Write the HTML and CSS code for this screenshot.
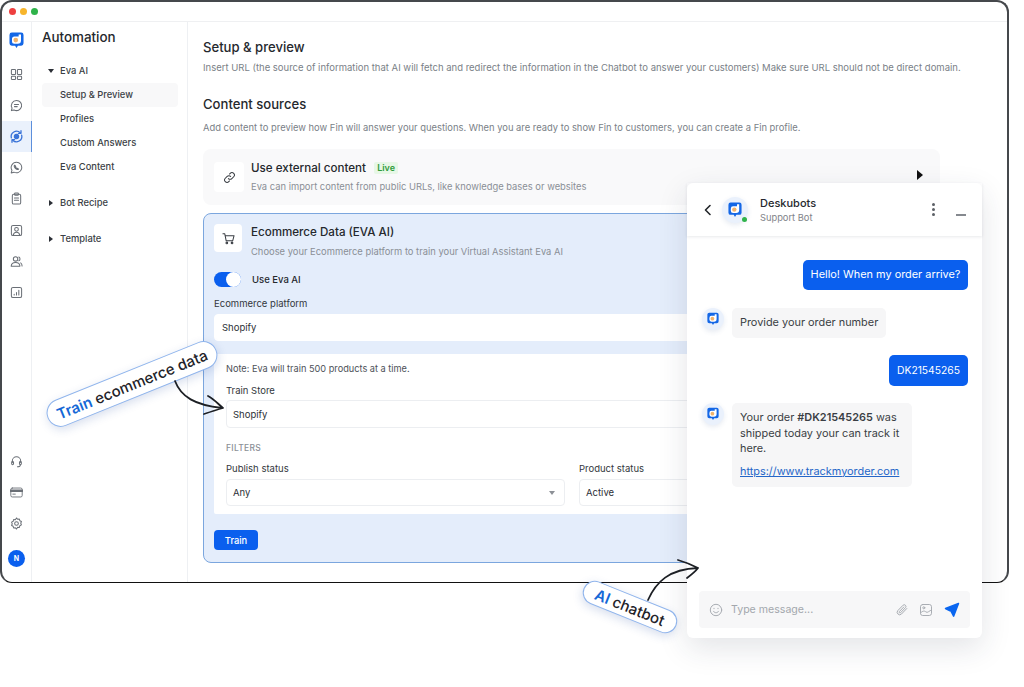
FILE: index.html
```html
<!DOCTYPE html>
<html lang="en">
<head>
<meta charset="utf-8">
<title>Automation</title>
<link rel="stylesheet" href="styles.css">
</head>
<body>
<svg class="defs" width="0" height="0"><symbol id="logo" viewBox="0 0 16 18"><path d="M3 .5h10A2.500 2.500 0 0 1 15.500 3v9a2.500 2.500 0 0 1-2.500 2.500H9.500L8 17l-1.500-2.500H3A2.500 2.500 0 0 1 .5 12V3A2.500 2.500 0 0 1 3 .5z" fill="#1467e6"/><path d="M12.800 2.500V9a3.500 3.500 0 0 1-3.500 3.500H6A2.700 2.700 0 0 1 3.200 9.800V7.500A2.700 2.700 0 0 1 6 4.800h4.300V2.500z" fill="#fff"/><circle cx="7.200" cy="8.500" r="2.500" fill="#f2b36c"/></symbol></svg>
<div class="stage">
  <div class="window">
    <div class="titlebar"><i class="dot red"></i><i class="dot yellow"></i><i class="dot green"></i></div>
    <div class="app">
      <nav class="rail">
        <div class="rail-logo"><svg width="15" height="17"><use href="#logo"/></svg></div>
        <div class="rail-item"><svg class="ri" viewBox="0 0 14 14"><rect x="1.500" y="1.500" width="4.500" height="5.500" rx=".8"/><rect x="8" y="1.500" width="4.500" height="5.500" rx=".8"/><rect x="1.500" y="9" width="4.500" height="3.500" rx=".8"/><rect x="8" y="9" width="4.500" height="3.500" rx=".8"/></svg></div>
        <div class="rail-item"><svg class="ri" viewBox="0 0 14 14"><path d="M7 1.500a5.500 5.500 0 1 1-2.600 10.300L1.500 12.500l.7-2.800A5.500 5.500 0 0 1 7 1.500z"/><path d="M4.800 5.800h4.400M4.800 8.200h3"/></svg></div>
        <div class="rail-item active"><svg class="ri blue" viewBox="0 0 16 16"><circle cx="8" cy="8" r="2.200" fill="#3b74d8"/><path d="M2.500 9.500A5.700 5.700 0 0 1 12 4M13.500 6.500A5.700 5.700 0 0 1 4 12"/><path d="M12.800 1.800v2.800H10M3.200 14.200v-2.800H6"/></svg></div>
        <div class="rail-item"><svg class="ri" viewBox="0 0 14 14"><path d="M7 1.300a5.700 5.700 0 1 1-2.800 10.700l-2.900.8.800-2.800A5.700 5.700 0 0 1 7 1.300z"/><path d="M5 4.500c-.8.800-.5 2 .8 3.400s2.600 1.700 3.400.9l-1-1-.7.400-1.600-1.700.3-.7z"/></svg></div>
        <div class="rail-item"><svg class="ri" viewBox="0 0 14 14"><rect x="2.500" y="2.500" width="9" height="10.500" rx="1.500"/><rect x="5" y="1" width="4" height="2.500" rx=".6"/><path d="M4.800 6.500h4.400M4.800 9h4.400"/></svg></div>
        <div class="rail-item"><svg class="ri" viewBox="0 0 14 14"><rect x="1.500" y="1.500" width="11" height="11" rx="1.800"/><circle cx="7" cy="5.700" r="2"/><path d="M3.500 12c.5-2 1.800-3 3.500-3s3 1 3.500 3"/></svg></div>
        <div class="rail-item"><svg class="ri" viewBox="0 0 14 14"><circle cx="6" cy="4.200" r="2.400"/><path d="M1.300 12c.2-2.600 2.200-4 4.700-4s4.500 1.400 4.700 4z"/><path d="M9.500 2.200a2.200 2.200 0 0 1 0 4M11.500 8.500c1 .6 1.500 1.800 1.500 3.400"/></svg></div>
        <div class="rail-item"><svg class="ri" viewBox="0 0 14 14"><rect x="1.500" y="1.500" width="11" height="11" rx="1.800"/><path d="M4.500 9.800v-.8M7 9.800V7M9.500 9.800V4.500"/></svg></div>
        <div class="rail-gap"></div>
        <div class="rail-item"><svg class="ri" viewBox="0 0 14 14"><path d="M2.500 8V6.500a4.500 4.500 0 0 1 9 0V8"/><rect x="1.800" y="7" width="2" height="3.500" rx="1"/><rect x="10.200" y="7" width="2" height="3.500" rx="1"/><path d="M11.200 10.500c0 1.500-1.500 2.200-3.200 2.200"/></svg></div>
        <div class="rail-item"><svg class="ri" viewBox="0 0 16 14"><rect x="1" y="1.500" width="14" height="11" rx="1.800"/><path d="M1 4.800h14" stroke-width="3"/><path d="M3.500 9h3"/></svg></div>
        <div class="rail-item"><svg class="ri" viewBox="0 0 14 14"><path d="M7 1l1.200 1.400 1.900-.2.500 1.800 1.700.9-.7 1.800.7 1.800-1.700.9-.5 1.800-1.900-.2L7 13l-1.200-1.400-1.900.2-.5-1.800-1.700-.9.700-1.800-.7-1.800 1.700-.9.500-1.800 1.900.2z"/><circle cx="7" cy="7" r="2"/></svg></div>
        <div class="avatar">N</div>
      </nav>
      <aside class="tree">
        <h2 class="tree-title">Automation</h2>
        <div class="tree-row head"><i class="caret down"></i>Eva AI</div>
        <div class="tree-row sub selected">Setup &amp; Preview</div>
        <div class="tree-row sub">Profiles</div>
        <div class="tree-row sub">Custom Answers</div>
        <div class="tree-row sub">Eva Content</div>
        <div class="tree-row head group"><i class="caret right"></i>Bot Recipe</div>
        <div class="tree-row head group"><i class="caret right"></i>Template</div>
      </aside>
      <main class="main">
        <h1 class="section-title">Setup &amp; preview</h1>
        <p class="section-desc">Insert URL (the source of information that AI will fetch and redirect the information in the Chatbot to answer your customers) Make sure URL should not be direct domain.</p>
        <h1 class="section-title second">Content sources</h1>
        <p class="section-desc lower">Add content to preview how Fin will answer your questions. When you are ready to show Fin to customers, you can create a Fin profile.</p>
        <section class="card plain">
          <div class="icon-box"><svg class="ci" viewBox="0 0 14 14"><path d="M5.800 8.200a2.600 2.600 0 0 0 3.700 0l2-2a2.600 2.600 0 0 0-3.700-3.700l-.8.800"/><path d="M8.200 5.800a2.600 2.600 0 0 0-3.700 0l-2 2a2.600 2.600 0 0 0 3.700 3.700l.8-.8"/></svg></div>
          <div class="card-text">
            <div class="card-title">Use external content <span class="badge">Live</span></div>
            <div class="card-sub">Eva can import content from public URLs, like knowledge bases or websites</div>
          </div>
          <i class="play"></i>
        </section>
        <section class="card eco">
          <div class="eco-head">
            <div class="icon-box small"><svg class="ci" viewBox="0 0 14 14"><path d="M1 2h2l1.500 7.500h7L13 4H3.500"/><circle cx="5.200" cy="11.800" r=".9"/><circle cx="10.800" cy="11.800" r=".9"/></svg></div>
            <div class="card-text">
              <div class="card-title">Ecommerce Data (EVA AI)</div>
              <div class="card-sub">Choose your Ecommerce platform to train your Virtual Assistant Eva AI</div>
            </div>
          </div>
          <div class="toggle-row"><span class="toggle"><i></i></span><span class="toggle-label">Use Eva AI</span></div>
          <label class="field-label">Ecommerce platform</label>
          <div class="input flat">Shopify</div>
          <div class="panel">
            <p class="note">Note: Eva will train 500 products at a time.</p>
            <label class="field-label">Train Store</label>
            <div class="input">Shopify</div>
            <div class="filters">FILTERS</div>
            <div class="filter-grid">
              <div><label class="field-label">Publish status</label><div class="input sel">Any<i class="sel-caret"></i></div></div>
              <div><label class="field-label">Product status</label><div class="input sel">Active<i class="sel-caret"></i></div></div>
            </div>
          </div>
          <button class="train">Train</button>
        </section>
      </main>
    </div>
  </div>

  <div class="chat">
    <header class="chat-head">
      <svg class="back" viewBox="0 0 10 12"><path d="M7 1.500L2.500 6 7 10.500"/></svg>
      <div class="bot big"><svg width="14" height="16"><use href="#logo"/></svg><i class="online"></i></div>
      <div class="chat-id"><div class="chat-name">Deskubots</div><div class="chat-role">Support Bot</div></div>
      <div class="kebab"><i></i><i></i><i></i></div>
      <i class="minus"></i>
    </header>
    <div class="msgs">
      <div class="bubble me first">Hello! When my order arrive?</div>
      <div class="bot-row"><div class="bot"><svg width="12" height="14"><use href="#logo"/></svg></div><div class="bubble them short">Provide your order number</div></div>
      <div class="bubble me code">DK21545265</div>
      <div class="bot-row"><div class="bot"><svg width="12" height="14"><use href="#logo"/></svg></div><div class="bubble them long"><p class="long-text">Your order <b>#DK21545265</b> was shipped today your can track it here.</p><a class="track">https://www.trackmyorder.com</a></div></div>
    </div>
    <div class="composer">
      <svg class="ti" viewBox="0 0 14 14"><circle cx="7" cy="7" r="5.700"/><path d="M4.500 8.300c.6 1 1.500 1.400 2.500 1.400s1.900-.4 2.500-1.400"/><path d="M5 5.300v.4M9 5.300v.4"/></svg>
      <span class="placeholder">Type message...</span>
      <svg class="ti" viewBox="0 0 14 14"><path d="M11.800 5.500L6.500 11a2.500 2.500 0 0 1-3.600-3.500l5.200-5.300a1.700 1.700 0 0 1 2.400 2.400L5.600 9.700a.8.800 0 0 1-1.200-1.200l4.400-4.500"/></svg>
      <svg class="ti" viewBox="0 0 14 14"><rect x="1.500" y="1.500" width="11" height="11" rx="2.200"/><circle cx="4.800" cy="4.800" r="1"/><path d="M1.500 10c2.500-2.500 4-2.300 5.500-1s3.500-1.500 5.500-2"/></svg>
      <svg class="send" viewBox="0 0 16 16"><path d="M14.500 1.500L1.500 6.500l4.500 2.300 3.200-2.800-2.200 3.200 2.600 5z" fill="#0a66f0" stroke="#0a66f0" stroke-width="1.500" stroke-linejoin="round"/></svg>
    </div>
  </div>

  <div class="tag tag-train"><span class="tag-blue">Train</span> ecommerce data</div>
  <svg class="arrow arrow-train" viewBox="0 0 70 50"><path d="M3 3c6 16 20 24 47 27M36 18c6 3 10 8 15 12-7 2-13 4-19 6"/></svg>
  <div class="tag tag-ai"><span class="tag-blue">AI</span> chatbot</div>
  <svg class="arrow arrow-ai" viewBox="0 0 70 50"><path d="M4 46C12 28 25 15 54 14M34 6c7 2 14 5 20 8-3 4-7 7-11 10"/></svg>
</div>
</body>
</html>
```
FILE: styles.css
```css
* { box-sizing: border-box; }
html, body { margin: 0; padding: 0; background: #fff; }
body { font-family: "Inter", "Noto Sans", sans-serif; color: #2b2f36; }
.defs { position: absolute; }
.stage { position: relative; width: 1024px; height: 687px; overflow: hidden; background: #fff; }
.window { width: 1009px; height: 583px; border: 2px solid #45484c; border-bottom: 1.500px solid #111; border-radius: 12px; display: flex; flex-direction: column; overflow: hidden; background: #fff; }
.titlebar { height: 20px; flex: none; display: flex; align-items: center; gap: 4px; padding-left: 6.500px; border-bottom: 1px solid #eff0f2; }
.dot { width: 7px; height: 7px; border-radius: 50%; }
.red { background: #ee3f3f; } .yellow { background: #f7b52c; } .green { background: #2fb34a; }
.app { flex: 1; display: flex; min-height: 0; }
.rail { width: 30px; flex: none; border-right: 1px solid #eef0f3; display: flex; flex-direction: column; align-items: stretch; padding-top: 8px; padding-bottom: 15px; }
.rail-logo { height: 20px; display: flex; align-items: center; justify-content: center; margin-bottom: 9px; }
.rail-item { height: 31.100px; flex: none; display: flex; align-items: center; justify-content: center; }
.rail-item.active { background: #eaf1fc; border-right: 1px solid #5c8fdc; margin-right: -1px; }
.ri { width: 13px; height: 13px; fill: none; stroke: #6a6f76; stroke-width: 1.100; stroke-linecap: round; stroke-linejoin: round; }
.ri.blue { width: 15px; height: 15px; stroke: #3b74d8; stroke-width: 1.400; }
.rail-gap { flex: 1; }
.avatar { width: 17px; height: 17px; border-radius: 50%; background: #0a5fee; color: #fff; font-size: 7px; font-weight: 700; display: flex; align-items: center; justify-content: center; align-self: center; margin-top: 11px; }
.tree { width: 156px; flex: none; border-right: 1px solid #eef0f3; padding: 7px 9px 0 10px; }
.tree-title { margin: 0 0 12.500px; font-size: 13.400px; line-height: 17px; font-weight: 500; color: #25282d; }
.tree-row { height: 24px; display: flex; align-items: center; padding-left: 18px; font-size: 9.400px; font-weight: 500; color: #3b3f46; position: relative; }
.tree-row.group { margin-top: 12px; }
.tree-row.selected { background: #f8f8f9; border-radius: 4px; }
.caret { position: absolute; left: 6px; top: 50%; width: 0; height: 0; }
.caret.down { margin-top: -2px; border-left: 3.500px solid transparent; border-right: 3.500px solid transparent; border-top: 4px solid #2b2f36; }
.caret.right { margin-top: -3px; margin-left: 1px; border-top: 3.500px solid transparent; border-bottom: 3.500px solid transparent; border-left: 4px solid #2b2f36; }
.main { flex: 1; min-width: 0; padding: 16px 0 0 15px; overflow: hidden; }
.section-title { margin: 0; font-size: 13.100px; line-height: 18px; font-weight: 500; color: #25282d; }
.section-title.second { margin-top: 21px; }
.section-desc { margin: 6px 0 0; font-size: 9.500px; line-height: 12px; color: #7a7f87; white-space: nowrap; }
.section-desc.lower { margin-top: 9px; font-size: 9.400px; }
.card { width: 737px; border-radius: 8px; }
.card.plain { margin-top: 15px; height: 56px; background: #f9f9fa; display: flex; align-items: center; padding: 0 11px; position: relative; }
.icon-box { width: 30px; height: 30px; flex: none; background: #fff; border-radius: 4px; display: flex; align-items: center; justify-content: center; }
.icon-box.small { width: 28px; height: 28px; }
.ci { width: 13px; height: 13px; fill: none; stroke: #3a3e44; stroke-width: 1.100; stroke-linecap: round; stroke-linejoin: round; }
.card-text { margin-left: 7px; }
.card-title { font-size: 11.600px; line-height: 15px; font-weight: 500; color: #25282d; white-space: nowrap; }
.badge { display: inline-block; margin-left: 5px; padding: 0 3px; background: #e7f7e6; color: #2f9c3a; font-size: 9px; line-height: 12px; font-weight: 600; border-radius: 2px; vertical-align: 1px; }
.card-sub { margin-top: 5px; font-size: 9.400px; line-height: 12px; color: #8a8f96; white-space: nowrap; }
.play { position: absolute; right: 17px; top: 21px; border-top: 5px solid transparent; border-bottom: 5px solid transparent; border-left: 6px solid #111; }
.card.eco { margin-top: 8px; height: 350px; background: #e4edfb; border: 1px solid #7ba6de; padding: 10px; }
.eco-head { display: flex; align-items: flex-start; height: 28px; }
.eco-head .card-text { margin-left: 9px; margin-top: 1px; }
.eco-head .card-sub { margin-top: 6px; }
.toggle-row { margin-top: 19px; display: flex; align-items: center; height: 16px; }
.toggle { width: 27px; height: 15px; border-radius: 8px; background: #0a5fee; position: relative; display: block; }
.toggle i { position: absolute; right: 0; top: 0; width: 15px; height: 15px; border-radius: 50%; background: #fff; }
.toggle-label { margin-left: 11px; font-size: 9.500px; font-weight: 500; color: #25282d; }
.field-label { display: block; font-size: 9.500px; line-height: 12px; color: #33373d; }
.toggle-row + .field-label { margin-top: 11px; }
.input { height: 28px; background: #fff; border: 1px solid #eceef1; border-radius: 4px; margin-top: 4px; padding: 0 6px; display: flex; align-items: center; font-size: 9.500px; color: #2b2f36; position: relative; }
.input.flat { border-color: #fff; height: 27px; margin-top: 4px; padding: 0 7px; }
.panel { margin-top: 13px; height: 160px; background: #fff; padding: 9px 12px 0; border-radius: 2px; }
.note { margin: 0 0 10px; font-size: 9.200px; line-height: 12px; color: #4d5158; }
.panel > .field-label { margin-bottom: -1px; }
.filters { margin-top: 14px; font-size: 8.500px; line-height: 12px; letter-spacing: .3px; font-weight: 500; color: #8b8f96; }
.filter-grid { margin-top: 9px; display: grid; grid-template-columns: 339px 339px; column-gap: 14px; }
.filter-grid .input { height: 27px; margin-top: 4px; }
.sel-caret { position: absolute; right: 9px; top: 11px; border-left: 3.500px solid transparent; border-right: 3.500px solid transparent; border-top: 4.500px solid #8c9096; }
.train { display: block; margin-top: 16px; width: 44px; height: 20px; border: 0; border-radius: 4px; background: #0a5fee; color: #fff; font: 500 9.300px "Inter", sans-serif; padding: 0; }

.chat { position: absolute; left: 687px; top: 183px; width: 295px; height: 455px; background: #fff; border-radius: 6px; box-shadow: 0 10px 30px rgba(40, 50, 70, .13); display: flex; flex-direction: column; }
.chat-head { height: 53px; flex: none; display: flex; align-items: center; padding: 0 0 0 16px; box-shadow: 0 1px 3px rgba(30, 40, 60, .1); position: relative; }
.back { width: 10px; height: 12px; fill: none; stroke: #23262b; stroke-width: 1.600; stroke-linecap: round; stroke-linejoin: round; }
.bot { width: 22px; height: 22px; flex: none; border-radius: 50%; background: #eaf1fc; display: flex; align-items: center; justify-content: center; position: relative; box-shadow: 0 2px 5px rgba(60, 90, 150, .12); }
.bot.big { width: 26px; height: 26px; margin-left: 9px; }
.online { position: absolute; right: 1px; bottom: 1px; width: 5px; height: 5px; border-radius: 50%; background: #2fb34a; }
.chat-id { margin-left: 12px; flex: 1; }
.chat-name { font-size: 11px; line-height: 14px; font-weight: 500; color: #25282d; }
.chat-role { font-size: 9.300px; line-height: 13px; margin-top: 1px; color: #7f8389; }
.kebab { display: flex; flex-direction: column; gap: 2px; margin-right: 21px; }
.kebab i { width: 3px; height: 3px; border-radius: 50%; background: #5c6066; }
.minus { width: 10px; height: 2px; background: #85898f; margin-right: 16px; margin-top: 10px; }
.msgs { flex: 1; padding: 24px 14px 0 15px; display: flex; flex-direction: column; align-items: flex-end; }
.bubble { font-size: 10.900px; line-height: 15.500px; border-radius: 5px; }
.bubble.me { background: #0a5fee; color: #fff; padding: 8px 8px; height: 31px; white-space: nowrap; }
.bubble.me.first { width: 165px; height: 30px; padding-top: 7px; margin-bottom: 18px; text-align: center; padding-left: 0; padding-right: 0; }
.bubble.me.code { width: 79px; padding: 8px 0; text-align: center; font-size: 10.300px; }
.bot-row { align-self: stretch; display: flex; gap: 8px; align-items: flex-start; }
.bot-row .bubble { background: #f6f6f7; color: #3a3e44; }
.bubble.short { width: 154px; height: 30px; padding: 7px 8px; white-space: nowrap; }
.bubble.long { width: 180px; height: 84px; padding: 7px 8px; }
.long-text { margin: 0; }
.bubble.long b { font-weight: 600; }
.track { display: block; margin-top: 7px; color: #2566c8; text-decoration: underline; white-space: nowrap; }
.bot-row + .bubble.me { margin-top: 17px; margin-bottom: 17px; }
.composer { flex: none; height: 37px; margin: 0 12px 10px; background: #f7f7f8; border-radius: 4px; display: flex; align-items: center; padding: 0 10px 0 10px; }
.ti { width: 14px; height: 14px; flex: none; fill: none; stroke: #a9adb3; stroke-width: 1; stroke-linecap: round; stroke-linejoin: round; }
.ti + .ti { margin-left: 10px; }
.placeholder { flex: 1; margin-left: 8px; font-size: 10.600px; color: #a3a7ad; }
.send { width: 16px; height: 16px; flex: none; margin-left: 11px; }

.tag { position: absolute; background: #fff; border: 1px solid #8fb4ec; border-radius: 20px; display: flex; align-items: center; justify-content: center; gap: 4px; color: #1f2329; font-weight: 500; white-space: nowrap; box-shadow: 0 3px 10px rgba(40, 80, 160, .18); }
.tag-blue { color: #1467d6; font-weight: 600; }
.tag-train { left: 41px; top: 370px; width: 182px; height: 28px; font-size: 15px; transform: rotate(-22deg); }
.tag-ai { left: 580px; top: 595px; width: 100px; height: 24px; font-size: 15px; transform: rotate(22deg); }
.arrow { position: absolute; width: 70px; height: 50px; fill: none; stroke: #1c1f24; stroke-width: 1.800; stroke-linecap: round; stroke-linejoin: round; }
.arrow-train { left: 172px; top: 378px; }
.arrow-ai { left: 644px; top: 554px; }
```
